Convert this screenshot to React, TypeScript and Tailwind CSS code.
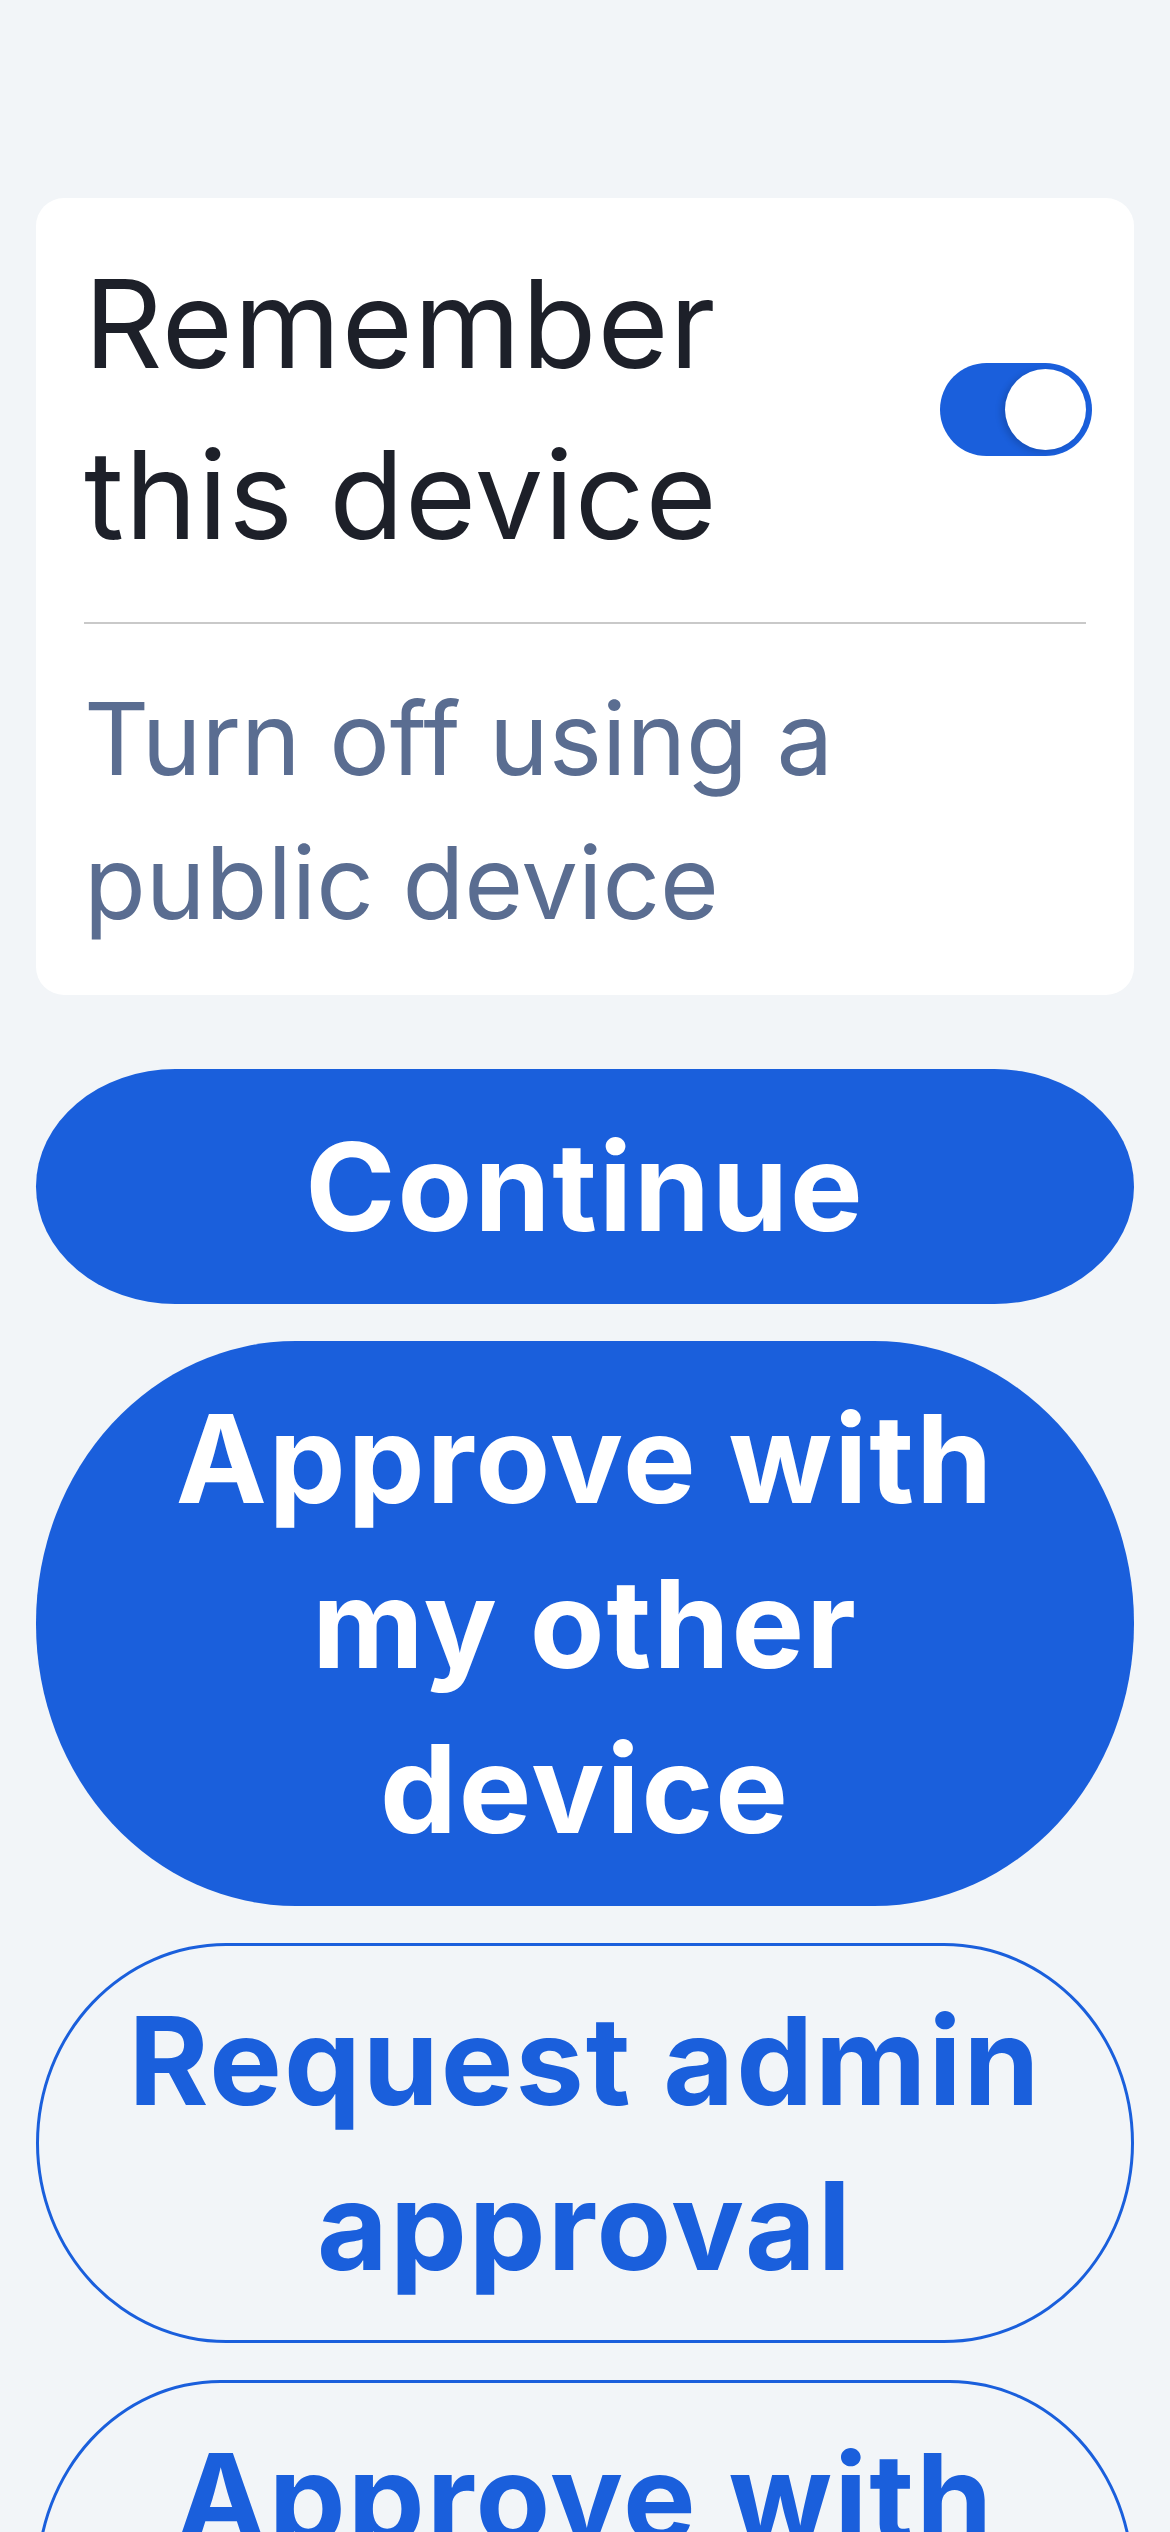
import React from "react";

export default function App() {
  return (
    <div
      className="min-h-[2532px] w-[1170px] bg-[#f2f5f8] px-[36px] pt-[198px]"
      style={{ fontFamily: "Inter, 'Noto Sans', sans-serif" }}
    >
      <div className="rounded-[28px] bg-white px-[48px] pt-[40px] pb-[41px]">
        <div className="flex items-center justify-between gap-[20px]">
          <div className="max-w-[780px] text-[122px] leading-[171px] font-normal tracking-[1px] text-[#1d2029]">
            Remember this device
          </div>
          <div className="relative -mr-[6px] h-[93px] w-[152px] shrink-0 rounded-full bg-[#1a5fdc]">
            <div className="absolute top-[6px] right-[6px] h-[81px] w-[81px] rounded-full bg-white shadow-[-4px_2px_6px_rgba(0,0,0,0.15)]" />
          </div>
        </div>
        <div className="mt-[42px] h-[2px] bg-[#c9c9c9]" />
        <div className="mt-[42px] max-w-[860px] text-[101px] leading-[144px] font-normal tracking-[0px] text-[#5a6d91]">
          Turn off using a public device
        </div>
      </div>

      <div className="mt-[74px] flex flex-col gap-[37px]">
        <button className="w-full rounded-[140px/118px] bg-[#1a5fdc] px-[80px] py-[35px] text-center text-[122px] leading-[165px] font-bold tracking-[2px] text-white">
          Continue
        </button>
        <button className="w-full rounded-[260px/282px] bg-[#1a5fdc] px-[80px] py-[35px] text-center text-[122px] leading-[165px] font-bold tracking-[2px] text-white">
          Approve with my other device
        </button>
        <button className="w-full rounded-[190px/200px] border-[3px] border-[#1a5fdc] bg-transparent px-[77px] py-[32px] text-center text-[122px] leading-[165px] font-bold tracking-[2px] text-[#1a5fdc]">
          Request admin approval
        </button>
        <button className="w-full rounded-[260px/282px] border-[3px] border-[#1a5fdc] bg-transparent px-[77px] py-[32px] text-center text-[122px] leading-[165px] font-bold tracking-[2px] text-[#1a5fdc]">
          Approve with my device
        </button>
      </div>
    </div>
  );
}
